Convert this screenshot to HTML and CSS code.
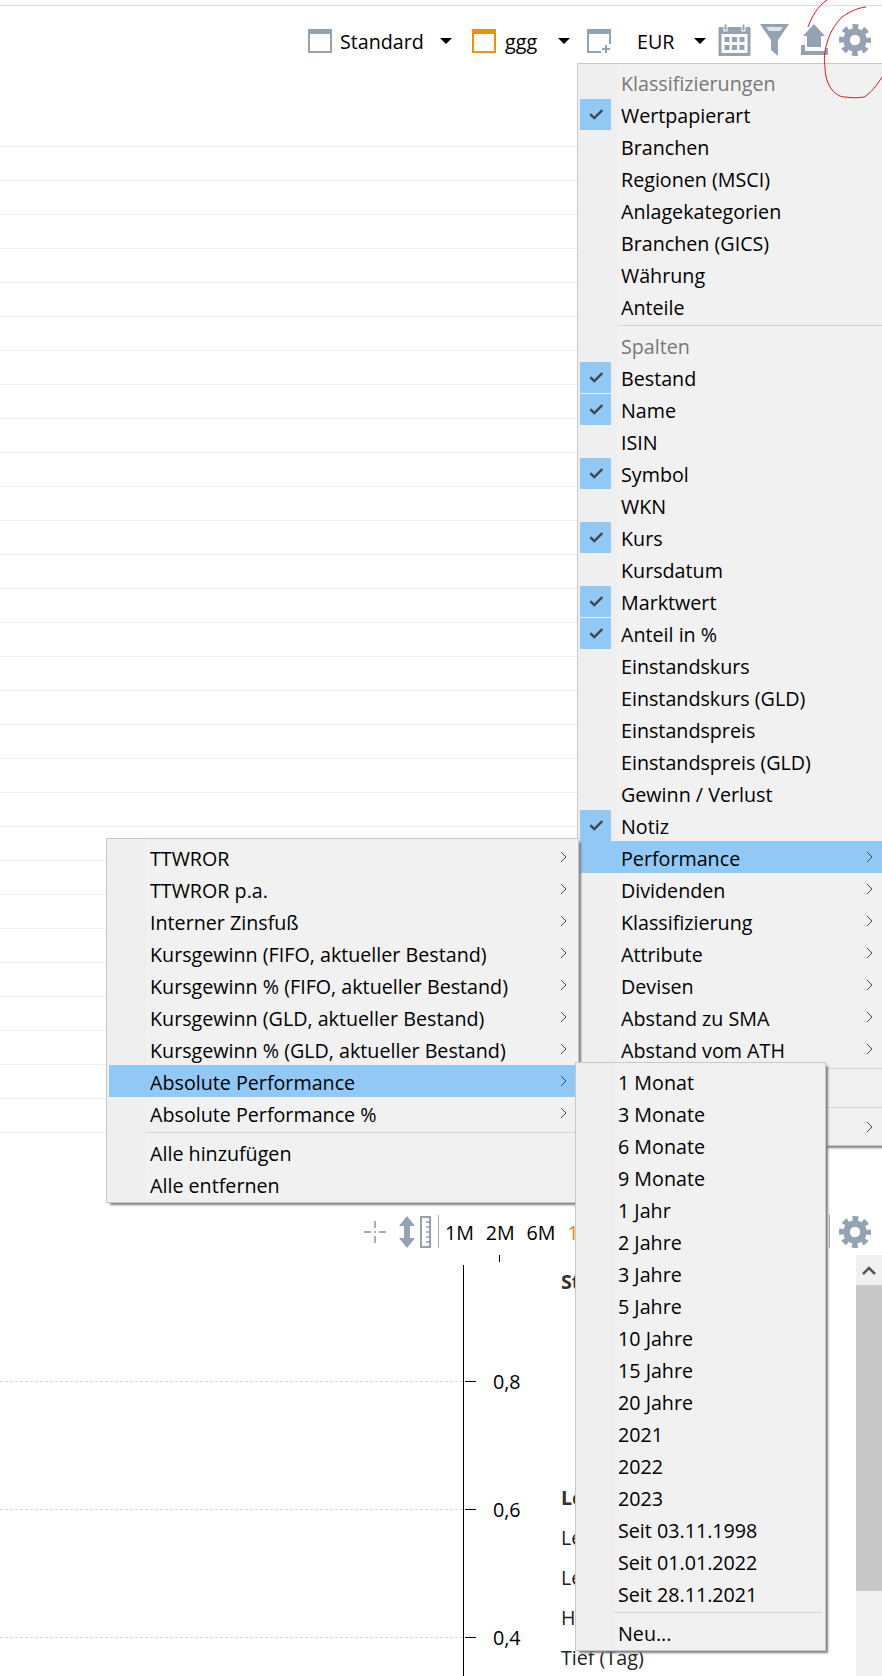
FILE: index.html
```html
<!DOCTYPE html>
<html lang="de">
<head>
<meta charset="utf-8">
<title>Vermögensaufstellung</title>
<link rel="stylesheet" href="styles.css">
</head>
<body>
<svg width="0" height="0" class="defs">
  <defs>
    <g id="gear" fill="none" stroke="#94a3b3">
      <circle cx="16" cy="16" r="8.500" stroke-width="6.500"/>
      <circle cx="16" cy="16" r="13.500" stroke-width="5" stroke-dasharray="5.800 4.803" stroke-dashoffset="2.900"/>
    </g>
    <path id="tick" d="M2 8 L5.5 11.5 L12.5 4.5" fill="none" stroke="#444" stroke-width="2"/>
    <path id="chev" d="M1 1 L6 6 L1 11" fill="none" stroke="#444" stroke-width="1"/>
  </defs>
</svg>

<div class="topline"></div>

<header class="toolbar">
  <svg class="win" viewBox="0 0 24 24"><rect x="1" y="1" width="22" height="22" fill="none" stroke="#94a3b3" stroke-width="2"/><rect x="0" y="0" width="24" height="5" fill="#94a3b3"/></svg>
  <span class="tb-label tb-standard">Standard</span>
  <span class="caret caret-a"></span>
  <svg class="win win-b" viewBox="0 0 24 24"><rect x="1" y="1" width="22" height="22" fill="none" stroke="#f29100" stroke-width="2"/><rect x="0" y="0" width="24" height="5" fill="#f29100"/></svg>
  <span class="tb-label tb-ggg">ggg</span>
  <span class="caret caret-b"></span>
  <svg class="win win-c" viewBox="0 0 24 24"><path d="M23 15V1H1v22h13" fill="none" stroke="#94a3b3" stroke-width="2"/><rect x="0" y="0" width="24" height="5" fill="#94a3b3"/><path d="M19 16v8M15 20h8" stroke="#94a3b3" stroke-width="2"/></svg>
  <span class="tb-label tb-eur">EUR</span>
  <span class="caret caret-c"></span>
  <svg class="ic-cal" viewBox="0 0 32 32"><rect x="0" y="3" width="32" height="29" rx="1" fill="#94a3b3"/><rect x="3" y="10" width="26" height="19" fill="#fff"/><rect x="5.500" y="0" width="3" height="7" fill="#94a3b3" stroke="#fff" stroke-width="1"/><rect x="23.500" y="0" width="3" height="7" fill="#94a3b3" stroke="#fff" stroke-width="1"/><path d="M6 13h5v5H6zM13.500 13h5v5h-5zM21 13h5v5h-5zM6 21h5v5H6zM13.500 21h5v5h-5zM21 21h5v5h-5z" fill="#94a3b3"/></svg>
  <svg class="ic-filter" viewBox="0 0 29 32"><path d="M0 0H29L18 16V32L11 26V16Z" fill="#94a3b3"/><path d="M6 3H23L20 7H9Z" fill="#dfe4e9"/></svg>
  <svg class="ic-export" viewBox="0 0 27 31"><path d="M13 0L24 12H20V23H6V12H2Z" fill="#94a3b3"/><path d="M2 21V29H26V24" fill="none" stroke="#94a3b3" stroke-width="4"/></svg>
  <svg class="ic-gear" viewBox="0 0 32 32"><use href="#gear"/></svg>
</header>

<section class="table">
  <div class="row"></div><div class="row"></div><div class="row"></div><div class="row"></div><div class="row"></div>
  <div class="row"></div><div class="row"></div><div class="row"></div><div class="row"></div><div class="row"></div>
  <div class="row"></div><div class="row"></div><div class="row"></div><div class="row"></div><div class="row"></div>
  <div class="row"></div><div class="row"></div><div class="row"></div><div class="row"></div><div class="row"></div>
  <div class="row"></div><div class="row"></div><div class="row"></div><div class="row"></div><div class="row"></div>
  <div class="row"></div><div class="row"></div><div class="row"></div><div class="row"></div><div class="row last"></div>
</section>

<div class="chartbar">
  <svg class="ic-cross" viewBox="0 0 22 22"><path d="M11 0v7M11 15v7M0 11h7M15 11h7" stroke="#a4b1bf" stroke-width="2"/><rect x="10" y="10" width="2" height="2" fill="#a4b1bf"/></svg>
  <svg class="ic-updown" viewBox="0 0 16 32"><path d="M8 0L16 10H11V22H16L8 32L0 22H5V10H0Z" fill="#94a3b3"/></svg>
  <svg class="ic-ruler" viewBox="0 0 11 32"><rect x="1" y="1" width="9" height="30" fill="none" stroke="#94a3b3" stroke-width="2"/><path d="M6 6h4M6 11h4M6 16h4M6 21h4M6 26h4" stroke="#94a3b3" stroke-width="1.500"/></svg>
  <span class="vsep"></span>
  <span class="range">1M</span><span class="range">2M</span><span class="range">6M</span><span class="range range-on">1J</span>
  <span class="vsep vsep-end"></span>
  <svg class="ic-gear" viewBox="0 0 32 32"><use href="#gear"/></svg>
</div>

<section class="chart">
  <div class="plot">
    <div class="dash"></div><div class="dash"></div><div class="dash"></div>
  </div>
  <div class="axis">
    <div class="top-tick"></div>
    <div class="level"><span class="level-tick"></span><span class="level-val">0,8</span></div>
    <div class="level"><span class="level-tick"></span><span class="level-val">0,6</span></div>
    <div class="level"><span class="level-tick"></span><span class="level-val">0,4</span></div>
  </div>
  <div class="stats">
    <div class="stat-head">Stammdaten</div>
    <div class="stat stat-bold">Letzter Kurs</div>
    <div class="stat">Letzter Handelstag</div>
    <div class="stat">Letzter Schluss</div>
    <div class="stat">Hoch (Tag)</div>
    <div class="stat">Tief (Tag)</div>
  </div>
  <div class="scroll">
    <div class="scroll-btn"><svg width="14" height="9" viewBox="0 0 14 9"><path d="M1 8L7 2L13 8" fill="none" stroke="#555" stroke-width="2.500"/></svg></div>
    <div class="scroll-thumb"></div>
  </div>
</section>

<nav class="menu menu-main">
  <div class="item head"><span class="check"></span><span class="label">Klassifizierungen</span></div>
  <div class="item"><span class="check on"><svg viewBox="0 0 14 14"><use href="#tick"/></svg></span><span class="label">Wertpapierart</span></div>
  <div class="item"><span class="check"></span><span class="label">Branchen</span></div>
  <div class="item"><span class="check"></span><span class="label">Regionen (MSCI)</span></div>
  <div class="item"><span class="check"></span><span class="label">Anlagekategorien</span></div>
  <div class="item"><span class="check"></span><span class="label">Branchen (GICS)</span></div>
  <div class="item"><span class="check"></span><span class="label">Währung</span></div>
  <div class="item"><span class="check"></span><span class="label">Anteile</span></div>
  <div class="sep"></div>
  <div class="item head"><span class="check"></span><span class="label">Spalten</span></div>
  <div class="item"><span class="check on"><svg viewBox="0 0 14 14"><use href="#tick"/></svg></span><span class="label">Bestand</span></div>
  <div class="item"><span class="check on"><svg viewBox="0 0 14 14"><use href="#tick"/></svg></span><span class="label">Name</span></div>
  <div class="item"><span class="check"></span><span class="label">ISIN</span></div>
  <div class="item"><span class="check on"><svg viewBox="0 0 14 14"><use href="#tick"/></svg></span><span class="label">Symbol</span></div>
  <div class="item"><span class="check"></span><span class="label">WKN</span></div>
  <div class="item"><span class="check on"><svg viewBox="0 0 14 14"><use href="#tick"/></svg></span><span class="label">Kurs</span></div>
  <div class="item"><span class="check"></span><span class="label">Kursdatum</span></div>
  <div class="item"><span class="check on"><svg viewBox="0 0 14 14"><use href="#tick"/></svg></span><span class="label">Marktwert</span></div>
  <div class="item"><span class="check on"><svg viewBox="0 0 14 14"><use href="#tick"/></svg></span><span class="label">Anteil in %</span></div>
  <div class="item"><span class="check"></span><span class="label">Einstandskurs</span></div>
  <div class="item"><span class="check"></span><span class="label">Einstandskurs (GLD)</span></div>
  <div class="item"><span class="check"></span><span class="label">Einstandspreis</span></div>
  <div class="item"><span class="check"></span><span class="label">Einstandspreis (GLD)</span></div>
  <div class="item"><span class="check"></span><span class="label">Gewinn / Verlust</span></div>
  <div class="item"><span class="check on"><svg viewBox="0 0 14 14"><use href="#tick"/></svg></span><span class="label">Notiz</span></div>
  <div class="item active"><span class="check"></span><span class="label">Performance</span><svg class="arrow" viewBox="0 0 7 12"><use href="#chev"/></svg></div>
  <div class="item"><span class="check"></span><span class="label">Dividenden</span><svg class="arrow" viewBox="0 0 7 12"><use href="#chev"/></svg></div>
  <div class="item"><span class="check"></span><span class="label">Klassifizierung</span><svg class="arrow" viewBox="0 0 7 12"><use href="#chev"/></svg></div>
  <div class="item"><span class="check"></span><span class="label">Attribute</span><svg class="arrow" viewBox="0 0 7 12"><use href="#chev"/></svg></div>
  <div class="item"><span class="check"></span><span class="label">Devisen</span><svg class="arrow" viewBox="0 0 7 12"><use href="#chev"/></svg></div>
  <div class="item"><span class="check"></span><span class="label">Abstand zu SMA</span><svg class="arrow" viewBox="0 0 7 12"><use href="#chev"/></svg></div>
  <div class="item"><span class="check"></span><span class="label">Abstand vom ATH</span><svg class="arrow" viewBox="0 0 7 12"><use href="#chev"/></svg></div>
  <div class="sep"></div>
  <div class="item"><span class="check"></span></div>
  <div class="sep"></div>
  <div class="item"><span class="check"></span><svg class="arrow" viewBox="0 0 7 12"><use href="#chev"/></svg></div>
</nav>

<nav class="menu menu-perf">
  <div class="item"><span class="check"></span><span class="label">TTWROR</span><svg class="arrow" viewBox="0 0 7 12"><use href="#chev"/></svg></div>
  <div class="item"><span class="check"></span><span class="label">TTWROR p.a.</span><svg class="arrow" viewBox="0 0 7 12"><use href="#chev"/></svg></div>
  <div class="item"><span class="check"></span><span class="label">Interner Zinsfuß</span><svg class="arrow" viewBox="0 0 7 12"><use href="#chev"/></svg></div>
  <div class="item"><span class="check"></span><span class="label">Kursgewinn (FIFO, aktueller Bestand)</span><svg class="arrow" viewBox="0 0 7 12"><use href="#chev"/></svg></div>
  <div class="item"><span class="check"></span><span class="label">Kursgewinn % (FIFO, aktueller Bestand)</span><svg class="arrow" viewBox="0 0 7 12"><use href="#chev"/></svg></div>
  <div class="item"><span class="check"></span><span class="label">Kursgewinn (GLD, aktueller Bestand)</span><svg class="arrow" viewBox="0 0 7 12"><use href="#chev"/></svg></div>
  <div class="item"><span class="check"></span><span class="label">Kursgewinn % (GLD, aktueller Bestand)</span><svg class="arrow" viewBox="0 0 7 12"><use href="#chev"/></svg></div>
  <div class="item active"><span class="check"></span><span class="label">Absolute Performance</span><svg class="arrow" viewBox="0 0 7 12"><use href="#chev"/></svg></div>
  <div class="item"><span class="check"></span><span class="label">Absolute Performance %</span><svg class="arrow" viewBox="0 0 7 12"><use href="#chev"/></svg></div>
  <div class="sep"></div>
  <div class="item"><span class="check"></span><span class="label">Alle hinzufügen</span></div>
  <div class="item"><span class="check"></span><span class="label">Alle entfernen</span></div>
</nav>

<nav class="menu menu-period">
  <div class="item"><span class="check"></span><span class="label">1 Monat</span></div>
  <div class="item"><span class="check"></span><span class="label">3 Monate</span></div>
  <div class="item"><span class="check"></span><span class="label">6 Monate</span></div>
  <div class="item"><span class="check"></span><span class="label">9 Monate</span></div>
  <div class="item"><span class="check"></span><span class="label">1 Jahr</span></div>
  <div class="item"><span class="check"></span><span class="label">2 Jahre</span></div>
  <div class="item"><span class="check"></span><span class="label">3 Jahre</span></div>
  <div class="item"><span class="check"></span><span class="label">5 Jahre</span></div>
  <div class="item"><span class="check"></span><span class="label">10 Jahre</span></div>
  <div class="item"><span class="check"></span><span class="label">15 Jahre</span></div>
  <div class="item"><span class="check"></span><span class="label">20 Jahre</span></div>
  <div class="item"><span class="check"></span><span class="label">2021</span></div>
  <div class="item"><span class="check"></span><span class="label">2022</span></div>
  <div class="item"><span class="check"></span><span class="label">2023</span></div>
  <div class="item"><span class="check"></span><span class="label">Seit 03.11.1998</span></div>
  <div class="item"><span class="check"></span><span class="label">Seit 01.01.2022</span></div>
  <div class="item"><span class="check"></span><span class="label">Seit 28.11.2021</span></div>
  <div class="sep"></div>
  <div class="item"><span class="check"></span><span class="label">Neu...</span></div>
</nav>

<svg class="scribble" viewBox="0 0 882 110" width="882" height="110">
  <path d="M827 0C818 6 812 16 808 27" fill="none" stroke="#e4141c" stroke-width="1"/>
  <path d="M866 7C856 8 848 13 842 17C834 25 829 35 827 43C824 52 824 60 825 67C825 75 827 82 830 87C834 93 839 97 845 97C852 98 858 98 864 97C871 93 877 85 882 77" fill="none" stroke="#e4141c" stroke-width="1"/>
</svg>
</body>
</html>
```
FILE: styles.css
```css
* { box-sizing: border-box; }
html, body { margin: 0; padding: 0; }
body {
  position: relative;
  width: 882px;
  height: 1676px;
  overflow: hidden;
  background: #fff;
  color: #000;
  font-family: "Open Sans", "Noto Sans", "Liberation Sans", sans-serif;
  font-size: 19.700px;
}
.defs { position: absolute; }

.topline { margin-top: 5px; height: 1px; background: #dedede; }

.toolbar { display: flex; align-items: flex-start; height: 140px; padding: 18px 0 0 308px; }
.win { width: 24px; height: 24px; margin-top: 5px; flex: none; }
.tb-label { line-height: 24px; margin-top: 6px; white-space: nowrap; }
.tb-standard { margin-left: 8px; width: 100px; }
.caret { width: 0; height: 0; border-left: 6.5px solid transparent; border-right: 6.5px solid transparent; border-top: 6.5px solid #000; margin-top: 14px; flex: none; }
.win-b { margin-left: 20px; }
.tb-ggg { margin-left: 9px; width: 53px; }
.win-c { margin-left: 17px; }
.tb-eur { margin-left: 26px; width: 57px; }
.ic-cal { width: 33px; height: 32px; margin-left: 12px; flex: none; }
.ic-filter { width: 29px; height: 32px; margin-left: 9px; flex: none; }
.ic-export { width: 27px; height: 31px; margin-left: 12px; flex: none; }
.ic-gear { width: 32px; height: 32px; flex: none; }
.toolbar .ic-gear { margin-left: 11px; }

.table { display: flex; flex-direction: column; }
.row { height: 34px; border-top: 1px solid #f0f0f0; }
.row.last { height: 1px; }

.chartbar { display: flex; align-items: center; height: 40px; margin-top: 82px; padding: 0 0 7px 364px; }
.ic-cross { width: 22px; height: 22px; flex: none; }
.ic-updown { width: 16px; height: 32px; margin-left: 13px; flex: none; }
.ic-ruler { width: 11px; height: 32px; margin-left: 5px; flex: none; }
.vsep { width: 1px; height: 33px; background: #a8a8a8; margin: 0 6px 0 7px; flex: none; }
.range { width: 40.800px; line-height: 24px; margin-top: 2px; }
.range-on { color: #e88a00; }
.vsep-end { margin: 0 9px 0 auto; }
.chartbar .ic-gear { margin-right: 11px; }

.chart { display: grid; grid-template-columns: 464px 97px 295px 26px; height: 421px; }
.plot { display: flex; flex-direction: column; gap: 127px; margin-top: 10px; padding-top: 116px; border-right: 1px solid #000; }
.dash { height: 1px; border-top: 1px dashed #d8d8d8; }
.axis { display: flex; flex-direction: column; gap: 104px; }
.top-tick { width: 1px; height: 7px; background: #000; margin: 0 0 3px 35px; }
.level { display: flex; align-items: center; height: 24px; }
.level-tick { width: 11px; height: 1px; background: #000; margin-left: 1px; }
.level-val { margin-left: 17px; }
.stats { white-space: nowrap; color: #222; }
.stat-head { font-weight: 700; color: #333; line-height: 24px; margin: 15px 0 184px; }
.stat { line-height: 40px; }
.stat-bold { font-weight: 700; color: #333; }
.scroll { background: #f0f0f0; }
.scroll-btn { display: flex; align-items: center; justify-content: center; height: 30px; }
.scroll-thumb { height: 306px; background: #c8c8c8; }

.menu {
  position: absolute;
  background: linear-gradient(to right, #efefef 39px, #f1f1f1 39px);
  border: 1px solid #c8c8c8;
  padding: 2px 0;
  box-shadow: 3px 3px 2px -1px #808080;
}
.menu-main { left: 577px; top: 63px; width: 310px; z-index: 1; }
.menu-perf { left: 106px; top: 838px; width: 473px; z-index: 2; }
.menu-period { left: 575px; top: 1062px; width: 251px; z-index: 3; }
.scribble { position: absolute; left: 0; top: 0; z-index: 4; }

.item { display: flex; align-items: center; height: 32px; margin-left: 2px; white-space: nowrap; }
.check { width: 31px; height: 31px; flex: none; display: flex; align-items: center; justify-content: center; }
.check.on { background: #90c8f6; }
.check svg { width: 16px; height: 16px; margin-top: -2px; }
.label { margin-left: 10px; position: relative; top: 1px; }
.head .label { color: #777; }
.active { background: #90c8f6; }
.arrow { width: 7px; height: 12px; margin-left: auto; flex: none; }
.menu-main .arrow { margin-right: 13.500px; }
.menu-perf .arrow { margin-right: 11px; }
.sep { height: 1px; background: #d4d4d4; margin: 3px 0 3px 40px; }
.menu-perf .sep { margin-left: 39px; }
.menu-period .label { margin-left: 9px; }
.menu-period .sep { margin: 3px 3px 3px 38px; }
```
